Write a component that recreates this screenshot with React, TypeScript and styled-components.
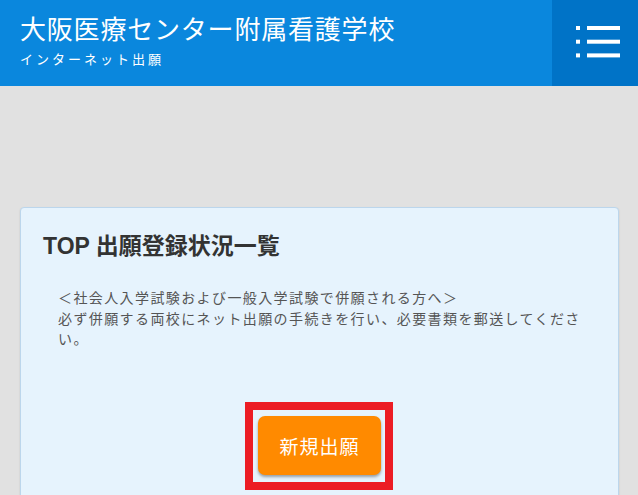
import styled, { createGlobalStyle } from "styled-components";

const GlobalStyle = createGlobalStyle`
  html, body {
    margin: 0;
    padding: 0;
    background: #e1e1e1;
  }
  body {
    font-family: "Liberation Sans", "Noto Sans CJK JP", sans-serif;
    overflow: hidden;
  }
`;

const Page = styled.div`
  width: 638px;
  height: 495px;
  overflow: hidden;
  background: #e1e1e1;
`;

const Header = styled.header`
  display: flex;
  height: 86px;
  background: #0a87dd;
  color: #fff;
`;

const Brand = styled.div`
  flex: 1;
  padding: 12px 0 0 20px;
`;

const SiteTitle = styled.h1`
  margin: 0;
  font-family: "Noto Sans CJK JP", sans-serif;
  font-size: 26px;
  font-weight: 400;
  line-height: 32px;
  letter-spacing: 0.8px;
`;

const SiteSub = styled.div`
  margin-top: 6px;
  font-family: "Noto Sans CJK JP", sans-serif;
  font-size: 13px;
  line-height: 18px;
  letter-spacing: 3px;
`;

const MenuButton = styled.button`
  display: flex;
  align-items: center;
  justify-content: center;
  width: 86px;
  height: 86px;
  padding: 0 0 3px 5px;
  border: none;
  background: #0073c7;
  cursor: pointer;
`;

const Card = styled.section`
  margin: 121px 19px 0 20px;
  min-height: 320px;
  padding: 24px 23px 0 22px;
  background: #e6f3fd;
  border: 1px solid #bcd6ec;
  border-radius: 4px;
  box-shadow: 0 1px 2px rgba(0, 0, 0, 0.12);
`;

const CardTitle = styled.h2`
  margin: 0;
  font-size: 23px;
  font-weight: 700;
  line-height: 29px;
  color: #333;
`;

const Notice = styled.p`
  margin: 26px 8px 0 15px;
  font-family: "Noto Sans CJK JP", sans-serif;
  font-size: 14px;
  line-height: 20.5px;
  letter-spacing: 1.4px;
  color: #555;
`;

const Actions = styled.div`
  display: flex;
  justify-content: center;
  margin-top: 53px;
`;

const Highlight = styled.div`
  padding: 6px 4px 7px 5px;
  border: 8px solid #ec1c24;
`;

const PrimaryButton = styled.button`
  display: block;
  width: 123px;
  height: 59px;
  border: none;
  border-radius: 7px;
  background: #ff8a00;
  box-shadow: 0 2px 3px rgba(0, 0, 0, 0.35);
  color: #fff;
  font-family: "Noto Sans CJK JP", sans-serif;
  font-size: 19px;
  letter-spacing: 1px;
  cursor: pointer;
`;

const MenuIcon = () => (
  <svg width="44" height="32" viewBox="0 0 44 32" fill="#fff">
    <rect x="0" y="0" width="4" height="4" />
    <rect x="0" y="13.7" width="4" height="4" />
    <rect x="0" y="27.4" width="4" height="4" />
    <rect x="11" y="0" width="33" height="4" />
    <rect x="11" y="13.7" width="33" height="4" />
    <rect x="11" y="27.4" width="33" height="4" />
  </svg>
);

const App = () => (
  <>
    <GlobalStyle />
    <Page>
      <Header>
        <Brand>
          <SiteTitle>大阪医療センター附属看護学校</SiteTitle>
          <SiteSub>インターネット出願</SiteSub>
        </Brand>
        <MenuButton aria-label="menu">
          <MenuIcon />
        </MenuButton>
      </Header>
      <Card>
        <CardTitle>TOP 出願登録状況一覧</CardTitle>
        <Notice>
          ＜社会人入学試験および一般入学試験で併願される方へ＞
          <br />
          必ず併願する両校にネット出願の手続きを行い、必要書類を郵送してください。
        </Notice>
        <Actions>
          <Highlight>
            <PrimaryButton>新規出願</PrimaryButton>
          </Highlight>
        </Actions>
      </Card>
    </Page>
  </>
);

export default App;
